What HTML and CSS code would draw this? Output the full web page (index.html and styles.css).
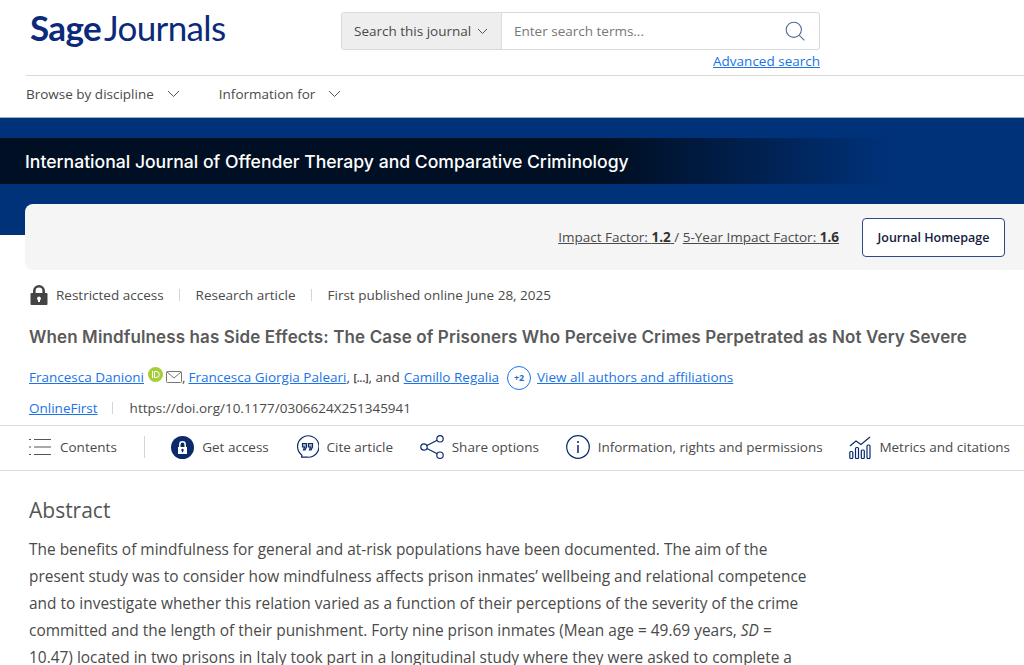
FILE: index.html
```html
<!DOCTYPE html>
<html lang="en">
<head>
  <meta charset="UTF-8">
  <title>When Mindfulness has Side Effects - Sage Journals</title>
  <link rel="stylesheet" href="styles.css">
</head>
<body>

  <header class="site-header">
    <div class="top-row">
      <a class="logo" href="#"><b>Sage</b><span>Journals</span></a>
      <div class="search-wrap">
        <form class="search">
          <div class="search-scope">Search this journal
            <svg class="chevron" width="11" height="7" viewBox="0 0 11 7"><path d="M1 1l4.5 4.5L10 1"/></svg>
          </div>
          <div class="search-input">
            <span>Enter search terms...</span>
            <svg class="search-icon" width="20" height="20" viewBox="0 0 20 20"><circle cx="8.8" cy="8.8" r="7.6"/><path d="M14.3 14.3l5 5"/></svg>
          </div>
        </form>
        <a class="advanced" href="#">Advanced search</a>
      </div>
    </div>
    <nav class="main-nav">
      <a href="#">Browse by discipline
        <svg class="chevron" width="13" height="8" viewBox="0 0 13 8"><path d="M1 1l5.5 5.5L12 1"/></svg>
      </a>
      <a href="#">Information for
        <svg class="chevron" width="13" height="8" viewBox="0 0 13 8"><path d="M1 1l5.5 5.5L12 1"/></svg>
      </a>
    </nav>
  </header>

  <section class="banner">
    <div class="banner-title">International Journal of Offender Therapy and Comparative Criminology</div>
  </section>

  <div class="journal-card">
    <span class="factors"><a href="#">Impact Factor: <b>1.2</b> </a>/ <a href="#">5-Year Impact Factor: <b>1.6</b></a></span>
    <a class="homepage-btn" href="#">Journal Homepage</a>
  </div>

  <main class="article">
    <div class="meta">
      <svg class="lock" width="18" height="20" viewBox="0 0 18 20"><path d="M3 8V6a6 6 0 0 1 12 0v2h1.500a1 1 0 0 1 1 1v10a1 1 0 0 1-1 1h-15a1 1 0 0 1-1-1V9a1 1 0 0 1 1-1zm2.600 0h6.800V6a3.400 3.400 0 0 0-6.800 0zM9 11.500a2 2 0 0 0-1 3.700V17h2v-1.800a2 2 0 0 0-1-3.700z" fill-rule="evenodd"/></svg>
      <span>Restricted access</span>
      <i class="sep"></i>
      <span>Research article</span>
      <i class="sep"></i>
      <span>First published online June 28, 2025</span>
    </div>

    <h1>When Mindfulness has Side Effects: The Case of Prisoners Who Perceive Crimes Perpetrated as Not Very Severe</h1>

    <div class="authors">
      <a href="#">Francesca Danioni</a>
      <svg class="orcid" width="15" height="15" viewBox="0 0 15 15"><circle cx="7.500" cy="7.500" r="7.500" fill="#a6ce39"/><path d="M4.500 4v7M6.500 4.500v6h1.800a3 3 0 0 0 0-6z" fill="none" stroke="#fff" stroke-width="1"/></svg>
      <svg class="mail" width="16" height="12" viewBox="0 0 16 12"><rect x=".5" y=".5" width="15" height="11" rx="1"/><path d="M1 1l7 6 7-6"/></svg><span class="comma">,</span>
      <a href="#">Francesca Giorgia Paleari</a><span class="rest">, <b>[...]</b>, and</span>
      <a href="#">Camillo Regalia</a>
      <span class="more">+2</span>
      <a href="#">View all authors and affiliations</a>
    </div>

    <div class="doi-row">
      <a href="#">OnlineFirst</a>
      <i class="sep"></i>
      <span>https://doi.org/10.1177/0306624X251345941</span>
    </div>
  </main>

  <nav class="toolbar">
    <a class="tool tool-contents" href="#">
      <svg width="22" height="18" viewBox="0 0 22 18"><path d="M5 1.500h17M5 9h17M5 16.500h17M0 1.500h2M0 9h2M0 16.500h2" stroke="#555" stroke-width="1.200" fill="none"/></svg>
      Contents
    </a>
    <i class="tool-sep"></i>
    <a class="tool" href="#">
      <svg width="23" height="23" viewBox="0 0 23 23"><circle cx="11.500" cy="11.500" r="11.500" fill="#0a2a6b"/><path d="M8.800 11V8.500a2.700 2.700 0 0 1 5.400 0V11" fill="none" stroke="#fff" stroke-width="1.500"/><rect x="7" y="11" width="9" height="7" fill="#fff"/><circle cx="11.500" cy="14" r="1.200" fill="#0a2a6b"/><path d="M11.500 14v2.200" stroke="#0a2a6b" stroke-width="1.200"/></svg>
      Get access
    </a>
    <a class="tool" href="#">
      <svg width="23" height="24" viewBox="0 0 23 24"><path d="M6 20.200A10.700 10.700 0 1 1 11.500 22.200H5.500z" fill="none" stroke="#0a2a6b" stroke-width="1.200" stroke-linejoin="round"/><path d="M6.500 8.500h4v3.500L9 15H7.500l1-3h-2zM12.500 8.500h4v3.500L15 15h-1.500l1-3h-2z" fill="#0a2a6b" fill-opacity=".35" stroke="#0a2a6b" stroke-width="1.200"/></svg>
      Cite article
    </a>
    <a class="tool" href="#">
      <svg width="24" height="24" viewBox="0 0 24 24"><g fill="none" stroke="#0a2a6b" stroke-width="1.200"><circle cx="4" cy="12" r="3.200"/><circle cx="20" cy="3.800" r="3.200"/><circle cx="20" cy="20.200" r="3.200"/><path d="M6.900 10.500l10.300-5.300M6.900 13.500l10.300 5.300"/></g></svg>
      Share options
    </a>
    <a class="tool" href="#">
      <svg width="24" height="24" viewBox="0 0 24 24"><circle cx="12" cy="12" r="11.300" fill="none" stroke="#0a2a6b" stroke-width="1.200"/><circle cx="12" cy="7" r="1" fill="#0a2a6b"/><path d="M12 10v8" stroke="#0a2a6b" stroke-width="1.500"/></svg>
      Information, rights and permissions
    </a>
    <a class="tool" href="#">
      <svg width="22" height="23" viewBox="0 0 22 23"><g fill="none" stroke="#0a2a6b" stroke-width="1.200"><rect x=".8" y="15.500" width="3" height="7" rx="1"/><rect x="6.500" y="11.500" width="3" height="11" rx="1"/><rect x="12.300" y="14" width="3" height="8.500" rx="1"/><rect x="18" y="9" width="3" height="13.500" rx="1"/><path d="M1 10l6-5 5 3.500L21 1"/></g></svg>
      Metrics and citations
    </a>
  </nav>

  <section class="abstract">
    <h2>Abstract</h2>
    <p>The benefits of mindfulness for general and at-risk populations have been documented. The aim of the<br>
    present study was to consider how mindfulness affects prison inmates&#8217; wellbeing and relational competence<br>
    and to investigate whether this relation varied as a function of their perceptions of the severity of the crime<br>
    committed and the length of their punishment. Forty nine prison inmates (Mean age = 49.69 years, <em>SD</em> =<br>
    10.47) located in two prisons in Italy took part in a longitudinal study where they were asked to complete a</p>
  </section>

</body>
</html>
```

FILE: styles.css
```css
* {
  box-sizing: border-box;
}
html, body {
  margin: 0;
  height: 100vh;
  overflow: hidden;
}
body {
  background-color: #fff;
  color: #4a4a4a;
  font-family: "Open Sans", "Noto Sans", sans-serif;
  font-size: 13.500px;
}
a {
  color: inherit;
  text-decoration: none;
}
svg {
  flex: none;
}
.chevron {
  fill: none;
  stroke: #555;
  stroke-width: 1;
}

/* header */
.site-header {
  padding-left: 26px;
}
.top-row {
  display: flex;
  height: 76px;
  border-bottom: 1px solid #d9d9d9;
}
.logo {
  width: 315px;
  padding: 6px 0 0 4px;
  font-family: Lato, sans-serif;
  font-size: 35px;
  line-height: 42px;
  color: #0b2a7c;
  letter-spacing: -0.65px;
}
.logo span {
  margin-left: 3px;
}
.search-wrap {
  width: 479px;
  padding-top: 12px;
}
.search {
  display: flex;
  height: 38px;
  border: 1px solid #d9d9d9;
  border-radius: 3px;
}
.search-scope {
  display: flex;
  align-items: center;
  gap: 6px;
  width: 160px;
  padding-left: 12px;
  background: #eee;
  border-right: 1px solid #ddd;
}
.search-input {
  flex: 1;
  display: flex;
  align-items: center;
  justify-content: space-between;
  padding: 0 14px 0 12px;
  color: #777;
}
.search-icon {
  fill: none;
  stroke: #4f6d8f;
  stroke-width: 1.100;
}
.advanced {
  display: block;
  text-align: right;
  line-height: 22px;
  color: #1a73e8;
  text-decoration: underline;
}
.main-nav {
  display: flex;
  align-items: center;
  gap: 39px;
  height: 41px;
  padding-bottom: 6px;
}
.main-nav a {
  display: flex;
  align-items: center;
  gap: 13px;
}

/* journal banner */
.banner {
  height: 118px;
  padding-top: 20px;
  background: #00327a;
  border-top: 1px solid #9fb0c8;
}
.banner-title {
  height: 46px;
  padding-left: 25px;
  font-family: Inter, sans-serif;
  font-size: 17.600px;
  font-weight: 500;
  line-height: 47px;
  color: #fff;
  background: linear-gradient(to right, #000f24 0, #000f24 60%, #00327a 87%);
}
.journal-card {
  display: flex;
  align-items: center;
  justify-content: flex-end;
  gap: 23px;
  height: 66px;
  margin: -31px 0 0 25px;
  padding-right: 19px;
  background: #f5f5f5;
  border-radius: 8px 0 0 8px;
  position: relative;
}
.factors a {
  text-decoration: underline;
}
.factors b {
  color: #333;
}
.homepage-btn {
  width: 143px;
  height: 39px;
  font-size: 12.500px;
  font-weight: 600;
  line-height: 37px;
  text-align: center;
  color: #14213d;
  background: #fff;
  border: 1px solid #2b4a85;
  border-radius: 4px;
}

/* article head */
.article {
  padding: 13px 0 0 29px;
}
.meta,
.doi-row {
  display: flex;
  align-items: center;
}
.meta {
  height: 23px;
}
.lock {
  fill: #444;
  margin: 0 8px 0 1px;
}
.sep {
  width: 1px;
  height: 12px;
  margin: 0 16px 0 15px;
  background: #d5d5d5;
}
h1 {
  margin: 19px 0 0;
  font-family: Inter, sans-serif;
  font-size: 17px;
  font-weight: 600;
  line-height: 24px;
  letter-spacing: 0.12px;
  color: #5a5a5a;
  white-space: nowrap;
}
.authors {
  display: flex;
  align-items: center;
  height: 28px;
  margin-top: 14px;
}
.authors a,
.doi-row a {
  color: #1a73e8;
  text-decoration: underline;
}
.orcid {
  margin: -6px 3px 0 4px;
}
.mail {
  fill: none;
  stroke: #777;
}
.comma {
  margin-right: 3px;
}
.rest {
  margin-right: 4px;
  white-space: pre;
}
.rest b {
  font-size: 10px;
}
.more {
  width: 24px;
  height: 24px;
  margin: 2px 6px 0 8px;
  font-size: 9px;
  font-weight: 700;
  line-height: 22px;
  text-align: center;
  color: #2a6fc9;
  border: 1px solid #1a73e8;
  border-radius: 50%;
}
.doi-row {
  height: 24px;
  margin-top: 5px;
}
.doi-row .sep {
  margin: 0 17px 0 14px;
}

/* article toolbar */
.toolbar {
  display: flex;
  align-items: center;
  gap: 26.700px;
  height: 46px;
  margin-top: 5px;
  padding: 0 0 2px 29px;
  border-top: 1px solid #ddd;
  border-bottom: 1px solid #ddd;
  white-space: nowrap;
}
.tool {
  display: flex;
  align-items: center;
  gap: 8px;
}
.tool-contents {
  gap: 9px;
}
.tool-sep {
  width: 1px;
  height: 22px;
  background: #d5d5d5;
}

/* abstract */
.abstract {
  padding: 23px 0 0 29px;
}
h2 {
  margin: 0;
  font-size: 21px;
  font-weight: 400;
  line-height: 32px;
  color: #555;
}
.abstract p {
  margin: 10px 0 0;
  font-size: 15.450px;
  line-height: 27px;
  white-space: nowrap;
}
```
